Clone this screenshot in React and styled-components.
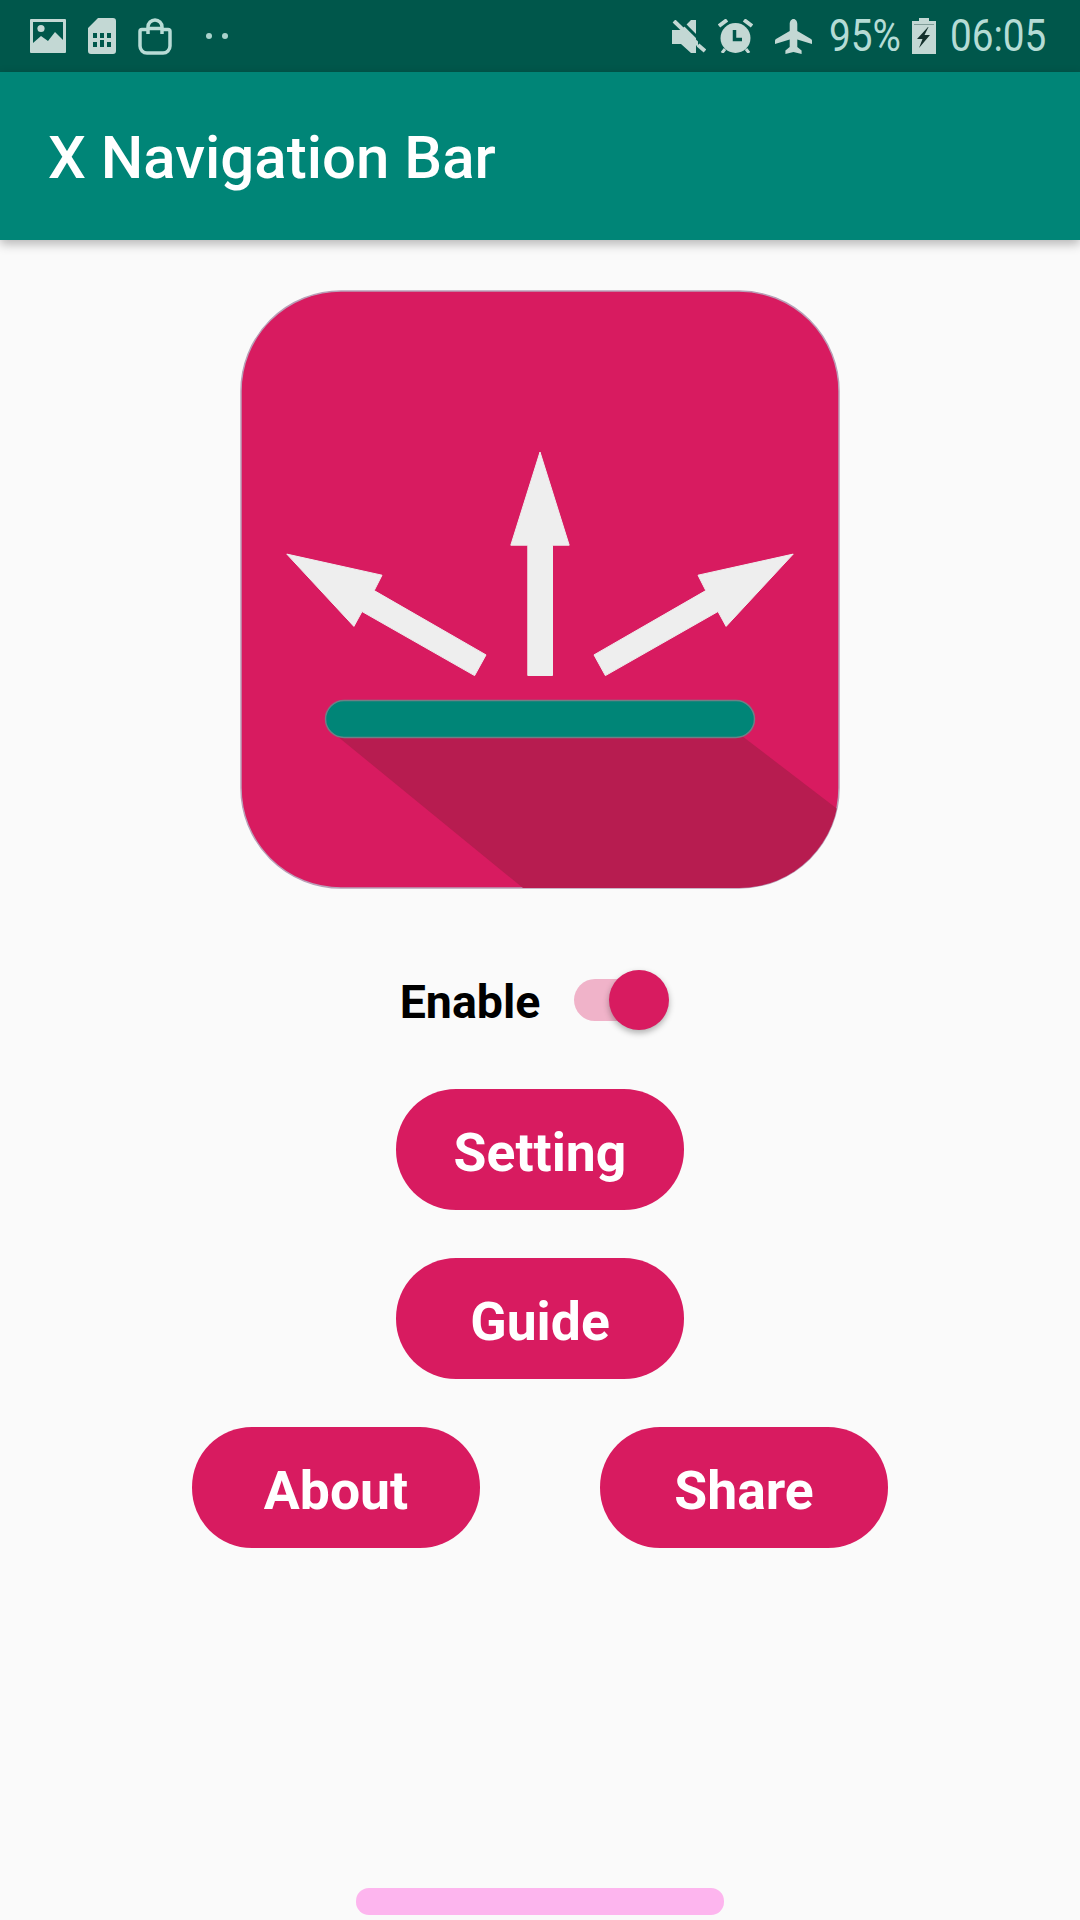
import React from "react";
import styled, { createGlobalStyle } from "styled-components";

const GlobalStyle = createGlobalStyle`
  html, body {
    margin: 0;
    padding: 0;
    background: #fafafa;
    font-family: Roboto, "Liberation Sans", sans-serif;
  }
`;

const ICON = "#c3d8d4";
const STATUS_BG = "#00574b";

const ImageIcon = () => (
  <svg width="36" height="34" viewBox="0 0 36 34">
    <path
      fill={ICON}
      fillRule="evenodd"
      d="M1 0h34a1 1 0 0 1 1 1v32a1 1 0 0 1-1 1H1a1 1 0 0 1-1-1V1a1 1 0 0 1 1-1zM3 3v21l8-7 7 5 7-9 8 8V3z"
    />
    <circle cx="11" cy="9.500" r="3.600" fill={ICON} />
  </svg>
);

const SimIcon = () => (
  <svg width="28" height="36" viewBox="0 0 28 36">
    <path
      fill={ICON}
      fillRule="evenodd"
      d="M10 0h15a3 3 0 0 1 3 3v30a3 3 0 0 1-3 3H3a3 3 0 0 1-3-3V10zM5 15v5h4v-5zM12 15v5h4v-5zM19 15v5h4v-5zM5 24v5h4v-5zM12 22v7h4v-7zM19 24v5h4v-5z"
    />
  </svg>
);

const BagIcon = () => (
  <svg width="34" height="37" viewBox="0 0 34 37" fill="none" stroke="#b8dcd6" strokeWidth="3.500">
    <path d="M9 11.500H4a2 2 0 0 0-2 2V28a7 7 0 0 0 7 7h16a7 7 0 0 0 7-7V13.500a2 2 0 0 0-2-2h-5" />
    <path d="M10 16V9a7 7 0 0 1 14 0v7" />
    <path d="M11 10.500h12" />
  </svg>
);

const MuteIcon = () => (
  <svg width="34" height="33" viewBox="0 0 34 33" fill={ICON}>
    <path d="M0 10h9L19 0h5v33h-5L9 24H0z" />
    <path d="M6-2 35 27" stroke={STATUS_BG} strokeWidth="3" />
    <path d="M2 1 33 31" stroke={ICON} strokeWidth="4" />
    <path d="M26 0h8v33h-8z" fill={STATUS_BG} />
    <path d="M26 25l7 6" stroke={ICON} strokeWidth="4" />
  </svg>
);

const AlarmIcon = () => (
  <svg width="35" height="34" viewBox="0 0 35 34">
    <circle cx="17.500" cy="19" r="15" fill={ICON} />
    <path d="M1 7 9 1M34 7 26 1" stroke={ICON} strokeWidth="4" />
    <path d="M7 30 4 34M28 30l3 4" stroke={ICON} strokeWidth="3" />
    <path d="M16.500 11v9.500h7.500" fill="none" stroke={STATUS_BG} strokeWidth="3.500" />
  </svg>
);

const PlaneIcon = () => (
  <svg width="37" height="35" viewBox="0 0 37 35" fill={ICON}>
    <path d="M18.500 0c2.300 0 3.800 2.500 3.800 5v7L36 20c.7.400 1 1 1 1.800V25l-14.700-4.500V28l4.300 3.500V35l-8.100-2-8.100 2v-3.500l4.300-3.500v-7.500L0 25v-3.200c0-.8.300-1.400 1-1.800l13.700-8V5c0-2.500 1.500-5 3.800-5z" />
  </svg>
);

const BatteryIcon = () => (
  <svg width="24" height="36" viewBox="0 0 24 36">
    <path fill={ICON} d="M7 0h10v3h7v33H0V3h7z" />
    <path stroke="#7f9d98" strokeWidth="1" d="M2 6.500h20" />
    <path fill="#14302c" d="M16 9 5 21h5.500L7 30l11-13h-5.500l4-8z" />
  </svg>
);

const Page = styled.div`
  display: flex;
  flex-direction: column;
  width: 1080px;
  height: 1920px;
  overflow: hidden;
  background: #fafafa;
`;

const StatusBar = styled.div`
  display: flex;
  align-items: center;
  justify-content: space-between;
  height: 72px;
  padding: 0 34px 0 30px;
  box-sizing: border-box;
  background: ${STATUS_BG};
`;

const StatusGroup = styled.div`
  display: flex;
  align-items: center;
  gap: ${(p) => p.$gap || 0}px;
`;

const StatusSlot = styled.div`
  display: flex;
  align-items: center;
  margin-left: ${(p) => p.$left || 0}px;
`;

const Dots = styled.div`
  display: flex;
  gap: 10px;
  margin-left: 12px;
  i {
    width: 6px;
    height: 6px;
    border-radius: 50%;
    background: #a9d3cc;
  }
`;

const StatusText = styled.span`
  display: block;
  width: ${(p) => p.$width}px;
  font-size: 45px;
  font-weight: 400;
  line-height: 72px;
  color: #b5dcd5;
  white-space: nowrap;
  transform: scaleX(0.86);
  transform-origin: left center;
`;

const AppBar = styled.header`
  display: flex;
  align-items: center;
  height: 168px;
  padding: 2px 0 0 48px;
  box-sizing: border-box;
  background: #008577;
  box-shadow: 0 4px 10px rgba(0, 0, 0, 0.28);
  position: relative;
`;

const Title = styled.h1`
  margin: 0;
  font-size: 60px;
  font-weight: 500;
  color: #fff;
`;

const Content = styled.main`
  display: flex;
  flex: 1;
  flex-direction: column;
  align-items: center;
  padding-top: 49px;
`;

const Logo = styled.svg`
  display: block;
  width: 600px;
  height: 600px;
`;

const EnableRow = styled.div`
  display: flex;
  align-items: center;
  gap: 34px;
  height: 60px;
  margin: 81px 16px 0 0;
`;

const EnableLabel = styled.span`
  padding-top: 3px;
  font-size: 46.500px;
  font-weight: 700;
  color: #000;
`;

const Switch = styled.div`
  position: relative;
  width: 90px;
  height: 42px;
  border-radius: 21px;
  background: #f0b3c9;
`;

const Thumb = styled.div`
  position: absolute;
  top: -9px;
  right: -5px;
  width: 60px;
  height: 60px;
  border-radius: 50%;
  background: #d81b60;
  box-shadow: 0 3px 6px rgba(0, 0, 0, 0.3);
`;

const PillButton = styled.button`
  display: block;
  width: 288px;
  height: 121px;
  margin-top: ${(p) => p.$top}px;
  padding: 5px 0 0;
  border: 0;
  border-radius: 60px;
  background: #d81b60;
  color: #fff;
  font-family: Roboto, "Liberation Sans", sans-serif;
  font-size: 53.500px;
  font-weight: 700;
`;

const ButtonRow = styled.div`
  display: flex;
  gap: 120px;
`;

const HomePill = styled.div`
  flex: none;
  width: 368px;
  height: 27px;
  margin: auto auto 5px;
  border-radius: 13px;
  background: #fdb5ee;
`;

const LogoArt = () => (
  <Logo viewBox="240 289 600 600">
    <defs>
      <clipPath id="logo-clip">
        <rect x="241" y="291" width="598" height="597" rx="100" />
      </clipPath>
    </defs>
    <rect x="241" y="291" width="598" height="597" rx="100" fill="#d81b60" stroke="#b9a0b8" strokeWidth="1.500" />
    <g clipPath="url(#logo-clip)">
      <path fill="#b71c50" d="M337 736 523 888H840V811L742 736z" />
    </g>
    <rect x="325.500" y="700.500" width="429" height="37" rx="18.500" fill="#008577" stroke="#6f7f86" strokeWidth="1.500" />
    <g fill="#eeeeee" stroke="#eeeeee" strokeWidth="1" strokeLinejoin="round">
      <path d="M540 452 569.200 545.200H552.500V675.500H527.800V545.200H510.800z" />
      <path d="M286.800 554.100 382 575.200 374.200 590.600 486 654.900 474.600 675.600 362 611.500 353.900 626.400z" />
      <path d="M793.200 554.100 698 575.200 705.800 590.600 594 654.900 605.400 675.600 718 611.500 726.100 626.400z" />
    </g>
  </Logo>
);

export default function App() {
  return (
    <Page>
      <GlobalStyle />
      <StatusBar>
        <StatusGroup $gap={22}>
          <ImageIcon />
          <SimIcon />
          <BagIcon />
          <Dots>
            <i />
            <i />
          </Dots>
        </StatusGroup>
        <StatusGroup>
          <MuteIcon />
          <StatusSlot $left={12}>
            <AlarmIcon />
          </StatusSlot>
          <StatusSlot $left={22}>
            <PlaneIcon />
          </StatusSlot>
          <StatusSlot $left={17}>
            <StatusText $width={70}>95%</StatusText>
          </StatusSlot>
          <StatusSlot $left={13}>
            <BatteryIcon />
          </StatusSlot>
          <StatusSlot $left={14}>
            <StatusText $width={96}>06:05</StatusText>
          </StatusSlot>
        </StatusGroup>
      </StatusBar>
      <AppBar>
        <Title>X Navigation Bar</Title>
      </AppBar>
      <Content>
        <LogoArt />
        <EnableRow>
          <EnableLabel>Enable</EnableLabel>
          <Switch>
            <Thumb />
          </Switch>
        </EnableRow>
        <PillButton $top={59}>Setting</PillButton>
        <PillButton $top={48}>Guide</PillButton>
        <ButtonRow>
          <PillButton $top={48}>About</PillButton>
          <PillButton $top={48}>Share</PillButton>
        </ButtonRow>
        <HomePill />
      </Content>
    </Page>
  );
}
